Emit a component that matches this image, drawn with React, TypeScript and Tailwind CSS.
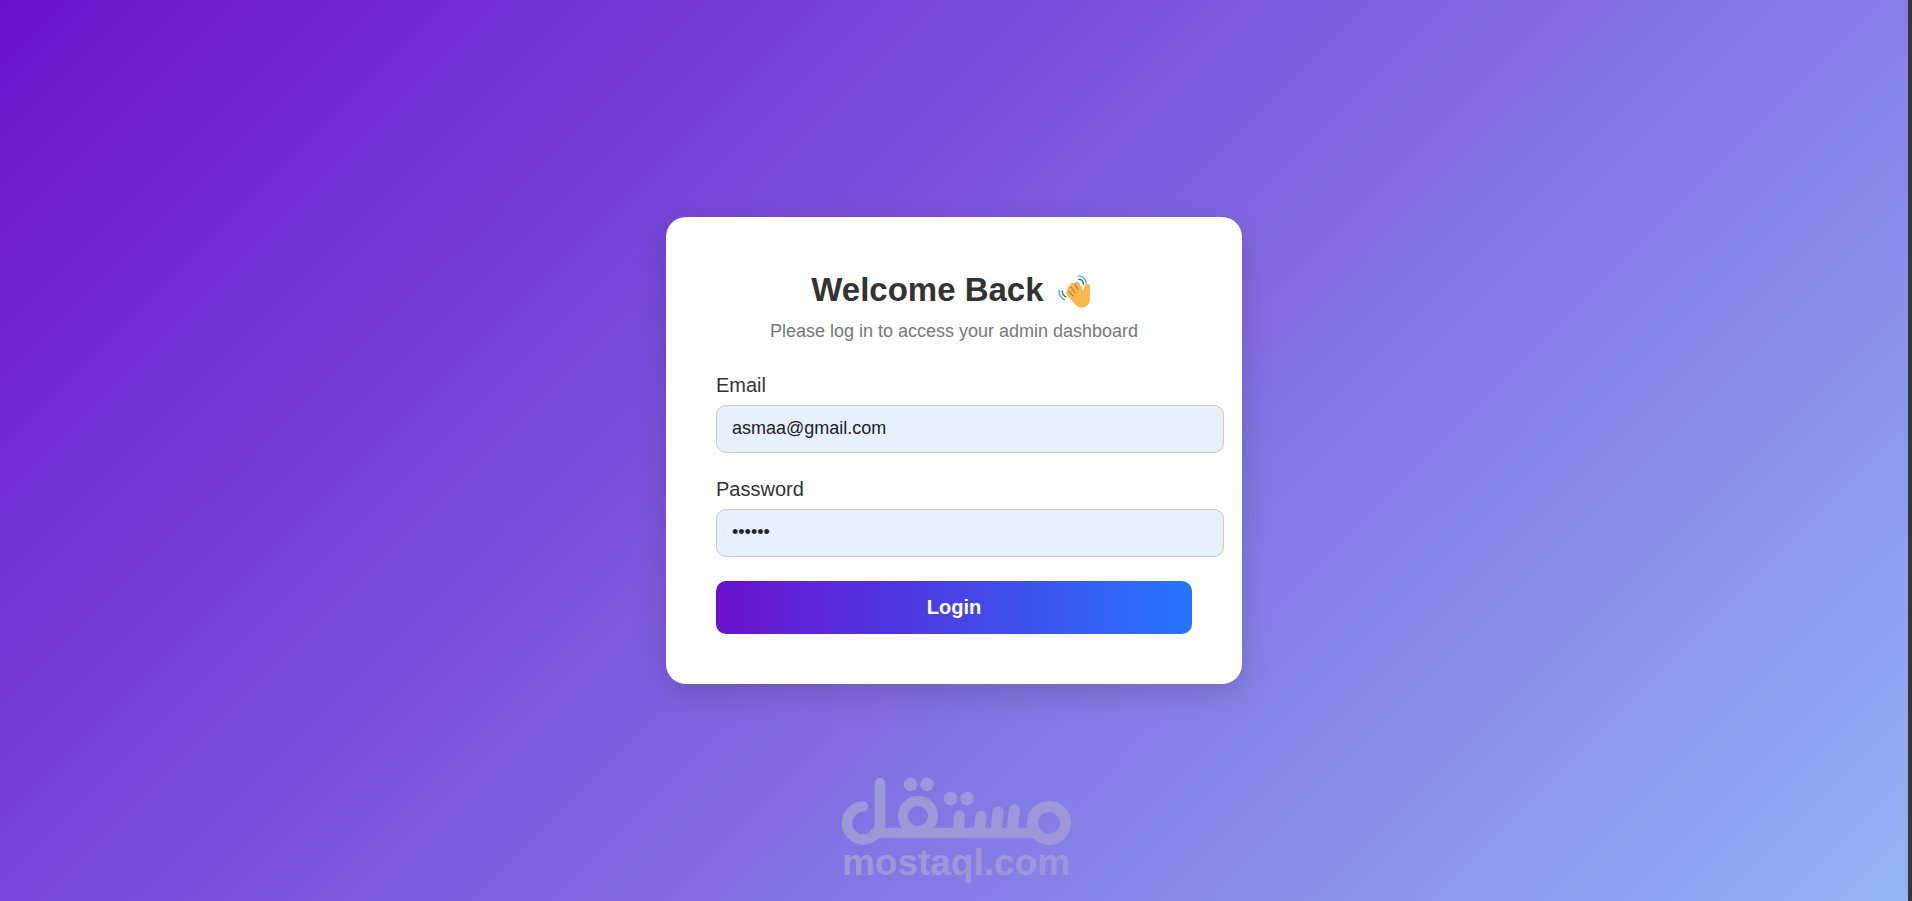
import { useState } from "react";

function WavingHand() {
  return (
    <svg viewBox="0 0 36 36" className="inline-block w-9 h-9 align-[-8px] mx-1" role="img" aria-label="Waving hand">
      <path
        d="M10.500 22.500C8.200 20 9.300 17.600 11.200 17.400C9.300 14.800 11 12.600 13.400 13.400C12.600 10.300 15.200 8.800 17.500 10.600C18.200 8 21.400 8 22.600 10.600L26.400 18L27.600 12.600C28.200 9.900 32.800 10 32.900 13.200L33.200 25C33.200 30.500 29.800 34.600 25 34.600C20.500 34.600 18 31.500 15.800 28.500Z"
        fill="#f9b84c"
      />
      <path d="M11.300 17.600l4.700 5.400M13.500 13.500l4.800 6.500M17.600 10.700l3.600 5.800" stroke="#a8662c" strokeWidth="1" strokeLinecap="round" fill="none" />
      <path d="M21.300 3.200c4-.5 7.400 2.200 7.900 6.600M2 17.500c-.2 4.500 2 7.600 5.600 9.200" stroke="#5a9bdc" strokeWidth="1.300" strokeLinecap="round" fill="none" />
      <path d="M21.800 6.300c2.400-.1 4.300 1.600 4.700 4.800M5.200 17.800c0 3 1.300 4.900 3.600 6" stroke="#2f62b5" strokeWidth="1.300" strokeLinecap="round" fill="none" />
    </svg>
  );
}

function Watermark() {
  return (
    <div className="absolute inset-x-0 bottom-5 flex flex-col items-center text-[#9f98d8] pointer-events-none">
      <svg viewBox="0 0 230 68" className="w-[230px] h-[68px]" fill="none" stroke="currentColor" strokeLinecap="round" strokeLinejoin="round" aria-hidden="true">
        <path d="M22 29.500A16.500 16.500 0 1 0 39 46V6M34 56H196" strokeWidth="10.500" />
        <circle cx="77" cy="39" r="15" strokeWidth="10" />
        <path d="M117.500 54L118.500 39M138.500 54L140 39M155 54L157 35M171 54L173.500 33" strokeWidth="11" />
        <circle cx="208" cy="46" r="16.500" strokeWidth="11" />
        <g fill="currentColor" stroke="none">
          <circle cx="69.500" cy="7.500" r="6.800" />
          <circle cx="86" cy="7.500" r="6.800" />
          <circle cx="109.500" cy="21.500" r="6.800" />
          <circle cx="126" cy="21.500" r="6.800" />
        </g>
      </svg>
      <span className="text-[37px] leading-9 font-bold">mostaql.com</span>
    </div>
  );
}

export default function App() {
  const [email, setEmail] = useState("asmaa@gmail.com");
  const [password, setPassword] = useState("123456");

  const inputClass =
    "block w-[calc(100%+32px)] h-12 px-[15px] pb-0.5 rounded-[10px] border border-[#c8c8c8] bg-[#e7f1fe] text-lg text-[#222222] outline-none";

  return (
    <div className="relative min-h-screen bg-[#373635] pr-1 font-['Liberation_Sans',Arial,sans-serif]">
      <main className="min-h-screen flex items-center justify-center bg-[linear-gradient(135deg,#6a11cb_0%,#94b4f4_100%)]">
        <div className="w-full max-w-[576px] p-[50px] rounded-[20px] bg-white shadow-[0_10px_30px_rgba(0,0,0,0.15)]">
          <h1 className="text-[33px] leading-[46px] font-bold text-center text-[#333333]">
            Welcome Back <WavingHand />
          </h1>
          <p className="mt-1.5 mb-[30px] text-lg leading-6 text-center text-[#777777]">
            Please log in to access your admin dashboard
          </p>

          <form onSubmit={(e) => e.preventDefault()} className="flex flex-col gap-6">
            <div>
              <label htmlFor="email" className="block mb-2 text-[20px] leading-6 text-[#333333]">Email</label>
              <input id="email" type="email" value={email} onChange={(e) => setEmail(e.target.value)} className={inputClass} />
            </div>
            <div>
              <label htmlFor="password" className="block mb-2 text-[20px] leading-6 text-[#333333]">Password</label>
              <input id="password" type="password" value={password} onChange={(e) => setPassword(e.target.value)} className={inputClass} />
            </div>
            <button type="submit" className="h-[53px] pb-0.5 rounded-[10px] bg-[linear-gradient(90deg,#6a11cb,#2575fc)] text-[20px] font-bold text-white cursor-pointer">
              Login
            </button>
          </form>
        </div>
      </main>

      <Watermark />
    </div>
  );
}
